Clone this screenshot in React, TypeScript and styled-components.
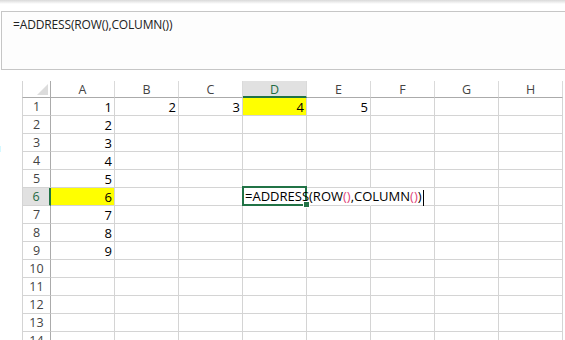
import React from "react";
import styled, { createGlobalStyle } from "styled-components";

const Global = createGlobalStyle`
  html, body { margin: 0; padding: 0; background: #ffffff; overflow: hidden; }
  body { width: 565px; height: 340px; font-family: "Open Sans", "Noto Sans", sans-serif; }
`;

const Page = styled.div`
  width: 565px;
  height: 340px;
  display: flex;
  flex-direction: column;
  overflow: hidden;
  background: #ffffff;
  & > * { flex: none; }
`;

const TopShade = styled.div`
  height: 11px;
  background: linear-gradient(#d9d9d9 0px, #ececec 2px, #ffffff 4px, #ffffff 11px);
`;

const FormulaBox = styled.div`
  height: 59px;
  margin-left: 1px;
  box-sizing: border-box;
  border: 1px solid #c6c6c6;
  border-right: none;
  background: #fdfdfd;
  padding: 5px 0 0 11px;
  font-size: 12px;
  color: #222;
  letter-spacing: -0.15px;
  line-height: 16px;
`;

const Spacer = styled.div`
  height: 11px;
`;

const Sheet = styled.div`
  display: flex;
  flex-direction: column;
`;

const Row = styled.div<{ $h: number }>`
  display: flex;
  flex: none;
  height: ${(p) => p.$h}px;
`;

const Gutter = styled.div`
  width: 22px;
  flex: none;
  position: relative;
  overflow: hidden;
  font-size: 13px;
  color: #222;
  display: flex;
  align-items: center;
`;

const GutterText = styled.span`
  margin-left: -6px;
  margin-top: 14px;
`;

const Corner = styled.div`
  width: 29px;
  flex: none;
  box-sizing: border-box;
  border-left: 1px solid #d4d4d4;
  border-right: 1px solid #ababab;
  border-bottom: 1px solid #ababab;
  position: relative;
`;

const Triangle = styled.div`
  position: absolute;
  right: 2px;
  bottom: 2px;
  width: 0;
  height: 0;
  border-left: 11px solid transparent;
  border-bottom: 11px solid #dcdcdc;
`;

const ColHead = styled.div<{ $active?: boolean }>`
  width: 64px;
  flex: none;
  box-sizing: border-box;
  background: ${(p) => (p.$active ? "#e1e1e1" : "#ffffff")};
  border-right: 1px solid #dadada;
  border-bottom: ${(p) => (p.$active ? "2px solid #217346" : "1px solid #ababab")};
  color: ${(p) => (p.$active ? "#1e6b44" : "#444")};
  font-size: 12.5px;
  display: flex;
  align-items: center;
  justify-content: center;
  padding-top: ${(p) => (p.$active ? "1px" : "0")};
`;

const RowHead = styled.div<{ $active?: boolean }>`
  width: 29px;
  flex: none;
  box-sizing: border-box;
  background: ${(p) => (p.$active ? "#e1e1e1" : "#ffffff")};
  border-left: 1px solid #d4d4d4;
  border-right: ${(p) => (p.$active ? "2px solid #217346" : "1px solid #ababab")};
  border-bottom: 1px solid #d4d4d4;
  color: ${(p) => (p.$active ? "#1e6b44" : "#444")};
  font-size: 12.5px;
  display: flex;
  align-items: center;
  justify-content: center;
`;

const Cell = styled.div<{ $fill?: boolean; $noRight?: boolean }>`
  width: 64px;
  flex: none;
  box-sizing: border-box;
  background: ${(p) => (p.$fill ? "#ffff00" : "#ffffff")};
  border-right: 1px solid ${(p) => (p.$noRight ? "transparent" : "#d4d4d4")};
  border-bottom: 1px solid #d4d4d4;
  font-size: 13px;
  color: #000;
  display: flex;
  align-items: center;
  justify-content: flex-end;
  padding-right: 2px;
  position: relative;
`;

const ActiveCell = styled(Cell)`
  justify-content: flex-start;
  padding-left: 2px;
  overflow: visible;
  z-index: 2;
`;

const Selection = styled.div`
  position: absolute;
  left: -1px;
  top: -2px;
  width: 65px;
  height: 20px;
  box-sizing: border-box;
  border: 2px solid #217346;
  pointer-events: none;
`;

const Handle = styled.div`
  position: absolute;
  right: -5px;
  bottom: -4px;
  width: 5px;
  height: 5px;
  background: #217346;
  border: 1px solid #ffffff;
`;

const EditText = styled.span`
  white-space: nowrap;
  position: relative;
  z-index: 3;
`;

const Paren = styled.span`
  color: #e0467a;
`;

const Caret = styled.span`
  display: inline-block;
  width: 1px;
  height: 16px;
  background: #000;
  vertical-align: middle;
  margin-left: 1px;
`;

const cols = ["A", "B", "C", "D", "E", "F", "G", "H"];

const values: Record<string, string> = {
  "1-A": "1",
  "1-B": "2",
  "1-C": "3",
  "1-D": "4",
  "1-E": "5",
  "2-A": "2",
  "3-A": "3",
  "4-A": "4",
  "5-A": "5",
  "6-A": "6",
  "7-A": "7",
  "8-A": "8",
  "9-A": "9",
};

const fills = new Set(["1-D", "6-A"]);

export default function App() {
  const rows = Array.from({ length: 14 }, (_, i) => i + 1);
  return (
    <Page>
      <Global />
      <TopShade />
      <FormulaBox>=ADDRESS(ROW(),COLUMN())</FormulaBox>
      <Spacer />
      <Sheet>
        <Row $h={17}>
          <Gutter />
          <Corner>
            <Triangle />
          </Corner>
          {cols.map((c) => (
            <ColHead key={c} $active={c === "D"}>
              {c}
            </ColHead>
          ))}
        </Row>
        {rows.map((r) => (
          <Row key={r} $h={18}>
            <Gutter>{r === 3 ? <GutterText>4</GutterText> : null}</Gutter>
            <RowHead $active={r === 6}>{r}</RowHead>
            {cols.map((c) => {
              const key = `${r}-${c}`;
              if (r === 6 && c === "D") {
                return (
                  <ActiveCell key={key}>
                    <Selection>
                      <Handle />
                    </Selection>
                    <EditText>
                      =ADDRESS(ROW<Paren>()</Paren>,COLUMN<Paren>()</Paren>)
                      <Caret />
                    </EditText>
                  </ActiveCell>
                );
              }
              return (
                <Cell key={key} $fill={fills.has(key)} $noRight={r === 6 && c === "E"}>
                  {values[key] ?? ""}
                </Cell>
              );
            })}
          </Row>
        ))}
      </Sheet>
    </Page>
  );
}
